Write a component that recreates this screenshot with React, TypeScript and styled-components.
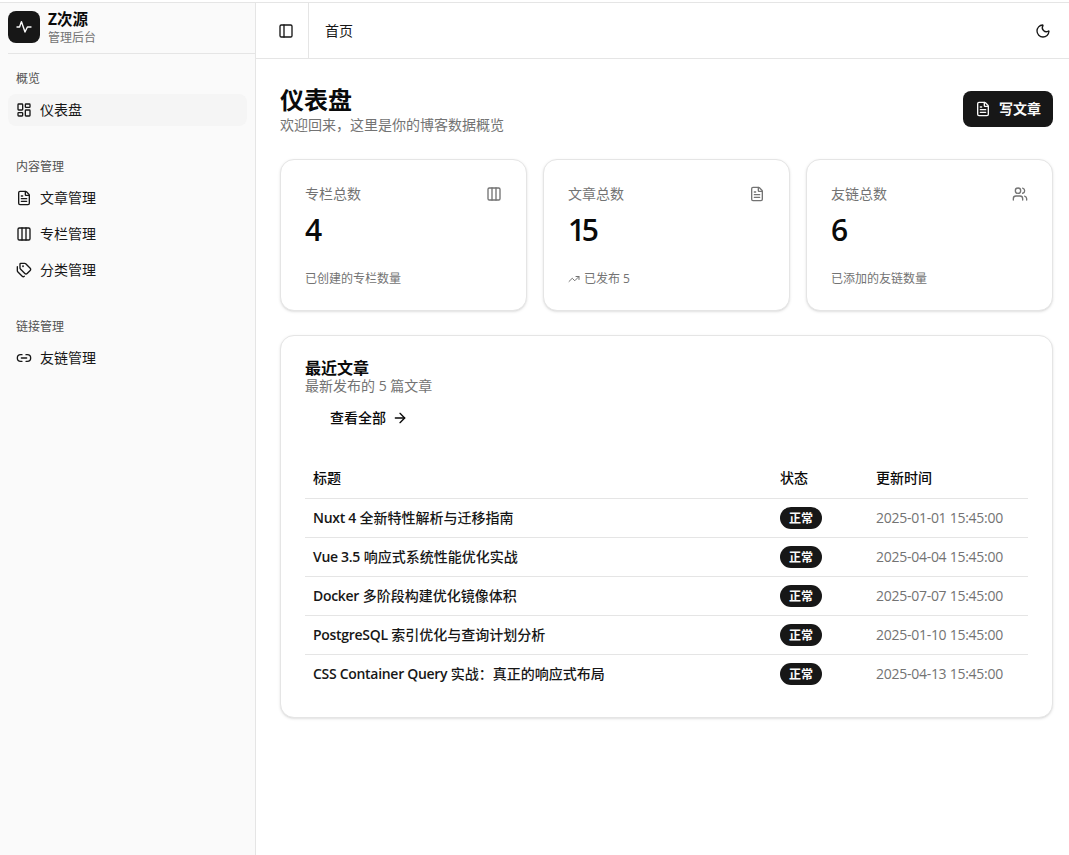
import React from 'react';
import styled, { createGlobalStyle } from 'styled-components';
import {
  ArrowRight,
  Columns3,
  FileText,
  LayoutDashboard,
  Link2,
  Moon,
  PanelLeft,
  Tags,
  TrendingUp,
  Users,
} from 'lucide-react';

const GlobalStyle = createGlobalStyle`
  html, body {
    margin: 0;
    padding: 0;
    background: #fff;
  }

  body {
    font-family: "Open Sans", "Noto Sans CJK SC", sans-serif;
    color: #0a0a0a;
  }

  * {
    box-sizing: border-box;
  }
`;

const navGroups = [
  { label: '概览', items: [{ name: '仪表盘', icon: LayoutDashboard, active: true }] },
  {
    label: '内容管理',
    items: [
      { name: '文章管理', icon: FileText },
      { name: '专栏管理', icon: Columns3 },
      { name: '分类管理', icon: Tags },
    ],
  },
  { label: '链接管理', items: [{ name: '友链管理', icon: Link2 }] },
];

const stats = [
  { title: '专栏总数', value: '4', note: '已创建的专栏数量', icon: Columns3 },
  { title: '文章总数', value: '15', note: '已发布 5', icon: FileText, trend: true },
  { title: '友链总数', value: '6', note: '已添加的友链数量', icon: Users },
];

const articles = [
  { latin: 'Nuxt 4', title: ' 全新特性解析与迁移指南', time: '2025-01-01 15:45:00' },
  { latin: 'Vue 3.5', title: ' 响应式系统性能优化实战', time: '2025-04-04 15:45:00' },
  { latin: 'Docker', title: ' 多阶段构建优化镜像体积', time: '2025-07-07 15:45:00' },
  { latin: 'PostgreSQL', title: ' 索引优化与查询计划分析', time: '2025-01-10 15:45:00' },
  { latin: 'CSS Container Query', title: ' 实战：真正的响应式布局', time: '2025-04-13 15:45:00' },
];

export default function App() {
  return (
    <>
      <GlobalStyle />
      <Page>
        <Sidebar>
          <Brand>
            <BrandLogo>
              <svg
                width="16"
                height="16"
                viewBox="0 0 16 16"
                fill="none"
                stroke="currentColor"
                strokeWidth="1.4"
                strokeLinecap="round"
                strokeLinejoin="round"
              >
                <polyline points="1 8 3.6 8 5.4 2.6 9 13 11.4 8 15 8" />
              </svg>
            </BrandLogo>
            <BrandText>
              <BrandName>Z次源</BrandName>
              <BrandSub>管理后台</BrandSub>
            </BrandText>
          </Brand>
          {navGroups.map((group) => (
            <NavGroup key={group.label}>
              <GroupLabel>{group.label}</GroupLabel>
              {group.items.map((item) => (
                <NavItem key={item.name} $active={item.active}>
                  <item.icon size={16} strokeWidth={2} />
                  <NudgedText>{item.name}</NudgedText>
                </NavItem>
              ))}
            </NavGroup>
          ))}
        </Sidebar>
        <Main>
          <Header>
            <ToggleCell>
              <PanelLeft size={16} strokeWidth={2} />
            </ToggleCell>
            <Crumb>首页</Crumb>
            <ThemeButton>
              <Moon size={16} strokeWidth={2} />
            </ThemeButton>
          </Header>
          <Content>
            <TitleRow>
              <div>
                <PageTitle>仪表盘</PageTitle>
                <PageSub>欢迎回来，这里是你的博客数据概览</PageSub>
              </div>
              <WriteButton>
                <FileText size={16} strokeWidth={2} />
                <NudgedText>写文章</NudgedText>
              </WriteButton>
            </TitleRow>
            <StatGrid>
              {stats.map((stat) => (
                <StatCard key={stat.title}>
                  <StatTop>
                    <StatTitle>{stat.title}</StatTitle>
                    <stat.icon size={16} strokeWidth={2} color="#737373" />
                  </StatTop>
                  <StatValue>{stat.value}</StatValue>
                  <StatNote>
                    {stat.trend && <TrendingUp size={12} strokeWidth={2} />}
                    {stat.note}
                  </StatNote>
                </StatCard>
              ))}
            </StatGrid>
            <RecentCard>
              <RecentHead>
                <RecentTitle>最近文章</RecentTitle>
                <RecentSub>最新发布的 5 篇文章</RecentSub>
              </RecentHead>
              <ViewAll>
                <NudgedText>查看全部</NudgedText>
                <ArrowRight size={16} strokeWidth={2} />
              </ViewAll>
              <Table>
                <thead>
                  <tr>
                    <Th>标题</Th>
                    <Th>状态</Th>
                    <Th>更新时间</Th>
                  </tr>
                </thead>
                <tbody>
                  {articles.map((article) => (
                    <tr key={article.latin}>
                      <TitleCell>
                        <Latin>{article.latin}</Latin>
                        {article.title}
                      </TitleCell>
                      <Td>
                        <Badge>正常</Badge>
                      </Td>
                      <TimeCell>{article.time}</TimeCell>
                    </tr>
                  ))}
                </tbody>
              </Table>
            </RecentCard>
          </Content>
        </Main>
      </Page>
    </>
  );
}

const Page = styled.div`
  display: flex;
  height: 855px;
  padding-top: 2px;
  overflow: hidden;
`;

const Sidebar = styled.aside`
  width: 256px;
  flex-shrink: 0;
  padding-left: 8px;
  background: #fafafa;
  border-top: 1px solid #e5e5e5;
  border-right: 1px solid #e5e5e5;
`;

const Brand = styled.div`
  display: flex;
  align-items: center;
  gap: 8px;
  height: 51px;
  border-bottom: 1px solid #e5e5e5;
  padding-bottom: 3px;
`;

const BrandLogo = styled.div`
  width: 32px;
  height: 32px;
  border-radius: 8px;
  background: #171717;
  color: #fafafa;
  display: flex;
  align-items: center;
  justify-content: center;
`;

const BrandText = styled.div`
  display: flex;
  flex-direction: column;
  gap: 2px;
  padding-top: 3px;
`;

const BrandName = styled.span`
  font-size: 15.5px;
  line-height: 18px;
  font-weight: 700;
  color: #0a0a0a;
`;

const BrandSub = styled.span`
  font-size: 12px;
  line-height: 16px;
  color: #737373;
`;

const NavGroup = styled.nav`
  padding-right: 8px;
  margin-bottom: 24px;

  &:first-of-type {
    margin-top: 8px;
  }
`;

const GroupLabel = styled.div`
  height: 32px;
  padding: 1px 0 0 8px;
  font-size: 12px;
  line-height: 32px;
  color: #525252;
`;

const NavItem = styled.a<{ $active?: boolean }>`
  display: flex;
  align-items: center;
  gap: 8px;
  height: 32px;
  margin-bottom: 4px;
  padding-left: 8px;
  border-radius: 8px;
  font-size: 14px;
  color: #171717;
  background: ${(p) => (p.$active ? '#f5f5f5' : 'transparent')};
`;

const NudgedText = styled.span`
  padding-bottom: 2px;
`;

const Main = styled.main`
  flex: 1;
  min-width: 0;
`;

const Header = styled.header`
  display: flex;
  align-items: center;
  height: 57px;
  border-top: 1px solid #e5e5e5;
  border-bottom: 1px solid #e5e5e5;
`;

const ToggleCell = styled.div`
  width: 53px;
  height: 100%;
  padding-left: 8px;
  display: flex;
  align-items: center;
  justify-content: center;
  color: #171717;
  border-right: 1px solid #e5e5e5;
`;

const Crumb = styled.span`
  margin-left: 16px;
  padding-bottom: 2px;
  font-size: 14px;
  color: #171717;
`;

const ThemeButton = styled.div`
  margin-left: auto;
  margin-right: 18px;
  display: flex;
  color: #171717;
`;

const Content = styled.div`
  padding: 24px 16px 0 24px;
`;

const TitleRow = styled.div`
  display: flex;
  align-items: center;
  justify-content: space-between;
  margin-bottom: 24px;
  height: 52px;
`;

const PageTitle = styled.h1`
  margin: 0;
  padding-top: 1px;
  height: 32px;
  font-size: 24px;
  line-height: 32px;
  font-weight: 700;
  color: #0a0a0a;
`;

const PageSub = styled.p`
  margin: 0;
  font-size: 14px;
  line-height: 20px;
  color: #737373;
`;

const WriteButton = styled.button`
  display: flex;
  align-items: center;
  gap: 8px;
  height: 36px;
  padding: 0 12px;
  border: none;
  border-radius: 8px;
  background: #171717;
  color: #fafafa;
  font-family: inherit;
  font-size: 14px;
  font-weight: 600;
`;

const StatGrid = styled.div`
  display: grid;
  grid-template-columns: repeat(3, 1fr);
  gap: 16px;
  margin-bottom: 24px;
`;

const StatCard = styled.section`
  height: 152px;
  padding: 24px;
  background: #fff;
  border: 1px solid #e5e5e5;
  border-radius: 14px;
  box-shadow: 0 1px 3px rgba(0, 0, 0, 0.1), 0 1px 2px -1px rgba(0, 0, 0, 0.1);
`;

const StatTop = styled.div`
  display: flex;
  align-items: center;
  justify-content: space-between;
  height: 20px;
`;

const StatTitle = styled.span`
  padding-bottom: 2px;
  font-size: 14px;
  color: #737373;
`;

const StatValue = styled.div`
  margin-top: 8px;
  font-size: 30px;
  line-height: 36px;
  font-weight: 600;
  letter-spacing: -3.5px;
  color: #0a0a0a;
`;

const StatNote = styled.div`
  display: flex;
  align-items: center;
  gap: 4px;
  margin-top: 23px;
  font-size: 12px;
  line-height: 16px;
  color: #737373;
`;

const RecentCard = styled.section`
  height: 383px;
  padding: 24px;
  background: #fff;
  border: 1px solid #e5e5e5;
  border-radius: 14px;
  box-shadow: 0 1px 3px rgba(0, 0, 0, 0.1), 0 1px 2px -1px rgba(0, 0, 0, 0.1);
`;

const RecentHead = styled.div`
  display: flex;
  flex-direction: column;
`;

const RecentTitle = styled.h2`
  margin: 0;
  height: 16px;
  font-size: 16px;
  line-height: 16px;
  font-weight: 700;
  color: #0a0a0a;
`;

const RecentSub = styled.p`
  margin: 0;
  height: 20px;
  font-size: 14px;
  line-height: 20px;
  color: #737373;
`;

const ViewAll = styled.a`
  display: flex;
  align-items: center;
  gap: 6px;
  height: 36px;
  padding-left: 25px;
  margin-top: 4px;
  margin-bottom: 22px;
  font-size: 14px;
  font-weight: 500;
  color: #0a0a0a;
`;

const Table = styled.table`
  width: 100%;
  border-collapse: collapse;
  table-layout: fixed;

  th:nth-child(1) {
    width: 467px;
  }

  th:nth-child(2) {
    width: 96px;
  }

  tbody tr {
    border-top: 1px solid #e5e5e5;
  }

  thead tr {
    height: 40px;
  }

  tbody tr {
    height: 39px;
  }
`;

const Th = styled.th`
  padding: 0 8px 2px;
  text-align: left;
  font-size: 14px;
  font-weight: 500;
  color: #0a0a0a;
`;

const Td = styled.td`
  padding: 0 8px;
  font-size: 14px;
`;

const TitleCell = styled(Td)`
  padding-bottom: 2px;
  font-weight: 500;
  color: #171717;
  white-space: nowrap;
`;

const Latin = styled.span`
  font-weight: 600;
  letter-spacing: -0.3px;
`;

const TimeCell = styled(Td)`
  color: #737373;
  letter-spacing: -0.27px;
  white-space: nowrap;
`;

const Badge = styled.span`
  display: inline-flex;
  align-items: center;
  justify-content: center;
  width: 42px;
  height: 22px;
  border-radius: 999px;
  background: #171717;
  color: #fafafa;
  font-size: 12px;
  font-weight: 600;
  vertical-align: middle;
`;
